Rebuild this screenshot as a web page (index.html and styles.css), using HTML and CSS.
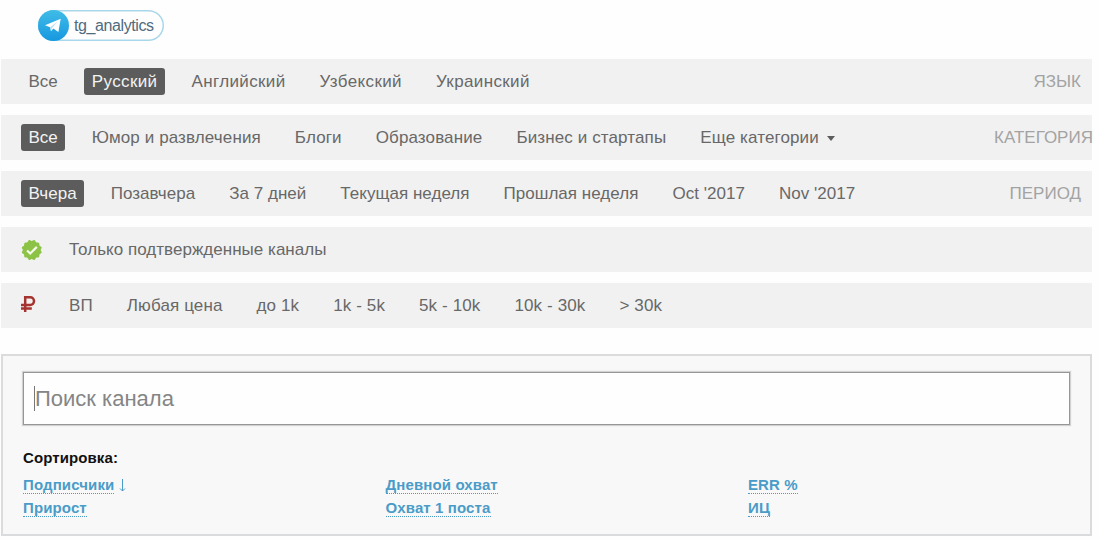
FILE: index.html
```
<!DOCTYPE html>
<html lang="ru">
  <head>
    <meta charset="UTF-8" />
    <meta name="viewport" content="width=device-width, initial-scale=1.0" />
    <title>tg_analytics</title>
    <link rel="stylesheet" href="styles.css">
  </head>
  <body>
    <header class="header">
      <a class="tg-badge" href="#">
        <svg class="tg-icon" viewBox="0 0 31 31">
          <defs>
            <linearGradient id="tg-fill" x1="0" y1="0" x2="0" y2="1">
              <stop offset="0" stop-color="#41bce7" />
              <stop offset="1" stop-color="#1698e0" />
            </linearGradient>
          </defs>
          <circle cx="15.5" cy="15.5" r="15.5" fill="url(#tg-fill)" />
          <path d="M7 15.2 22.7 8.8 20.4 22 15.3 18.6 13 21.2 12.2 17.3Z" fill="#fff" />
          <path d="M12.2 17.3 20 11.3 14 18 13 21.2Z" fill="#b9dff3" />
        </svg>
        <span class="tg-name">tg_analytics</span>
      </a>
    </header>

    <main>
      <div class="filters">
        <div class="filter languages">
          <a class="option" href="#">Все</a>
          <a class="option active" href="#">Русский</a>
          <a class="option" href="#">Английский</a>
          <a class="option" href="#">Узбекский</a>
          <a class="option" href="#">Украинский</a>
          <span class="filter-label">ЯЗЫК</span>
        </div>
        <div class="filter categories">
          <a class="option active" href="#">Все</a>
          <a class="option" href="#">Юмор и развлечения</a>
          <a class="option" href="#">Блоги</a>
          <a class="option" href="#">Образование</a>
          <a class="option" href="#">Бизнес и стартапы</a>
          <a class="option" href="#">Еще категории <span class="caret"></span></a>
          <span class="filter-label">КАТЕГОРИЯ</span>
        </div>
        <div class="filter">
          <a class="option active" href="#">Вчера</a>
          <a class="option" href="#">Позавчера</a>
          <a class="option" href="#">За 7 дней</a>
          <a class="option" href="#">Текущая неделя</a>
          <a class="option" href="#">Прошлая неделя</a>
          <a class="option" href="#">Oct '2017</a>
          <a class="option" href="#">Nov '2017</a>
          <span class="filter-label">ПЕРИОД</span>
        </div>
        <div class="filter">
          <span class="filter-icon">
            <svg width="22" height="22" viewBox="-11 -11 22 22">
              <g fill="#8cc346">
                <rect x="-7.8" y="-7.8" width="15.6" height="15.6" rx="1.6" />
                <rect x="-7.8" y="-7.8" width="15.6" height="15.6" rx="1.6" transform="rotate(30)" />
                <rect x="-7.8" y="-7.8" width="15.6" height="15.6" rx="1.6" transform="rotate(60)" />
              </g>
              <path d="M-4.8 .4-1.6 3.6 5.2-3.2" fill="none" stroke="#f4faed" stroke-width="2.2" />
            </svg>
          </span>
          <a class="option" href="#">Только подтвержденные каналы</a>
        </div>
        <div class="filter prices">
          <span class="filter-icon ruble">
            <svg width="15" height="16" viewBox="0 0 15 16">
              <path d="M4.2 16V1.3H9.2A3.5 3.5 0 0 1 9.2 8.9H0M0 12.4H10.8" fill="none" stroke="#a5332f" stroke-width="2.5" />
            </svg>
          </span>
          <a class="option" href="#">ВП</a>
          <a class="option" href="#">Любая цена</a>
          <a class="option" href="#">до 1k</a>
          <a class="option" href="#">1k - 5k</a>
          <a class="option" href="#">5k - 10k</a>
          <a class="option" href="#">10k - 30k</a>
          <a class="option" href="#">&gt; 30k</a>
        </div>
      </div>

      <section class="search-panel">
        <div class="search-box">
          <span class="text-cursor"></span>
          <span class="placeholder">Поиск канала</span>
        </div>
        <h2 class="sort-title">Сортировка:</h2>
        <div class="sort-grid">
          <div><a class="sort-link" href="#">Подписчики</a><svg class="arrow" width="7" height="13" viewBox="0 0 7 13"><path d="M3.5 0V12M1 9.5 3.5 12 6 9.5" /></svg></div>
          <div><a class="sort-link" href="#">Дневной охват</a></div>
          <div><a class="sort-link" href="#">ERR %</a></div>
          <div><a class="sort-link" href="#">Прирост</a></div>
          <div><a class="sort-link" href="#">Охват 1 поста</a></div>
          <div><a class="sort-link" href="#">ИЦ</a></div>
        </div>
      </section>
    </main>
  </body>
</html>
```
FILE: styles.css
```
* {
  margin: 0;
  padding: 0;
  box-sizing: border-box;
}

body {
  font-family: "Liberation Sans", Arial, sans-serif;
  background: #fefefe;
  color: #686868;
  font-size: 17px;
  padding: 10px 7px 0 1px;
}

a {
  color: inherit;
  text-decoration: none;
}

.header {
  height: 49px;
  padding-left: 37px;
}

.tg-badge {
  display: inline-flex;
  align-items: center;
  width: 126px;
  height: 31px;
  border-radius: 16px;
  box-shadow: inset 0 0 0 1.5px #a9d7ea;
}

.tg-icon {
  width: 31px;
  height: 31px;
  flex: none;
}

.tg-name {
  margin-left: 5px;
  font-size: 16px;
  letter-spacing: -0.4px;
  color: #4f6b7e;
  white-space: nowrap;
}

.filters {
  display: flex;
  flex-direction: column;
  gap: 11px;
}

.filter {
  display: flex;
  align-items: center;
  gap: 19px;
  height: 45px;
  padding: 0 11px 0 20px;
  background: #f1f1f1;
  white-space: nowrap;
  letter-spacing: 0.03px;
}

.languages .option {
  letter-spacing: 0.37px;
}

.languages .option:first-child {
  letter-spacing: 0;
}

.categories {
  letter-spacing: 0.12px;
}

.categories .option:first-child {
  letter-spacing: 0;
}

.prices {
  letter-spacing: 0.12px;
}

.option {
  padding: 0 7.5px;
  height: 27px;
  line-height: 27px;
  border-radius: 3px;
}

.option.active {
  background: #5c5c5c;
  color: #f3f3f3;
}

.caret {
  display: inline-block;
  margin-left: 3px;
  vertical-align: 2px;
  border-top: 5px solid #5c5c5c;
  border-left: 4.5px solid transparent;
  border-right: 4.5px solid transparent;
}

/* long labels run out over the right edge */
.filter-label {
  width: 87px;
  margin-left: auto;
  text-align: right;
  color: #a3a3a3;
  letter-spacing: 0;
}

.filter-icon {
  display: flex;
  width: 21.5px;
}

.ruble {
  padding-bottom: 3px;
}

/* Search and sorting */
.search-panel {
  height: 182px;
  margin-top: 26px;
  padding: 16px 20px 0;
  background: #f8f8f8;
  border: 2px solid #d9dbdd;
}

.search-box {
  display: flex;
  align-items: center;
  height: 53px;
  padding-left: 10px;
  background: #fefefe;
  border: 1px solid #969696;
  box-shadow: 0 0 1px 1px #d2d2d2;
}

.text-cursor {
  width: 1px;
  height: 25px;
  background: #777777;
}

.placeholder {
  font-size: 22px;
  color: #858585;
}

.sort-title {
  margin-top: 24px;
  font-size: 15px;
  line-height: 18px;
  letter-spacing: 0.1px;
  color: #111111;
}

.sort-grid {
  display: grid;
  grid-template-columns: 362.5px 362.5px 1fr;
  grid-auto-rows: 22.5px;
  margin-top: 9px;
  font-size: 15px;
  line-height: 17px;
}

.sort-link {
  display: inline-block;
  font-weight: bold;
  letter-spacing: 0.12px;
  color: #4a9cc8;
  border-bottom: 1px dotted #4a9cc8;
}

.arrow {
  margin-left: 5px;
  vertical-align: -2px;
  fill: none;
  stroke: #4a9cc8;
}
```
